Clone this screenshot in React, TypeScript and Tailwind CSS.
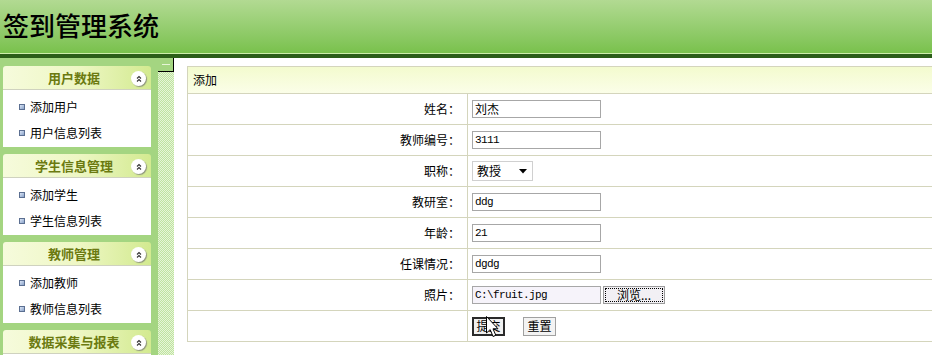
import React from "react";

const panels = [
  { title: "用户数据", items: ["添加用户", "用户信息列表"] },
  { title: "学生信息管理", items: ["添加学生", "学生信息列表"] },
  { title: "教师管理", items: ["添加教师", "教师信息列表"] },
  { title: "数据采集与报表", items: ["数据采集", "报表统计"] },
];

function Collapse() {
  return (
    <span className="absolute right-[5px] top-[5px] w-[15px] h-[15px] rounded-full bg-white shadow-[1px_1px_1px_#8f967e] flex items-center justify-center">
      <svg width="10" height="10" viewBox="0 0 10 10">
        <path d="M3 4.5 L5 2.5 L7 4.5" fill="none" stroke="#333" strokeWidth="1.1" />
        <path d="M3 7.5 L5 5.5 L7 7.5" fill="none" stroke="#333" strokeWidth="1.1" />
      </svg>
    </span>
  );
}

function Panel({ title, items }: { title: string; items: string[] }) {
  return (
    <div className="mb-[7px] w-[148px]">
      <div className="relative h-[24px] rounded-t-[3px] bg-gradient-to-r from-[#f6fbdc] via-[#eef7c4] to-[#d3ea90] border-b border-[#cfd2bf] flex items-center justify-center pr-[6px]">
        <span className="text-[13px] font-bold text-[#6b7a10]">{title}</span>
        <Collapse />
      </div>
      <div className="bg-white pt-[4px] pb-[1px] h-[57px]">
        {items.map((it) => (
          <div key={it} className="h-[26px] flex items-center pl-[16px]">
            <span className="w-[6px] h-[6px] border border-[#5b6f91] bg-gradient-to-br from-[#dbe6f6] to-[#8aa2c8] mr-[5px]" />
            <span className="text-[12px] text-black">{it}</span>
          </div>
        ))}
      </div>
    </div>
  );
}

function Row({ label, children }: { label: string; children?: React.ReactNode }) {
  return (
    <div className="flex h-[31px] border-t border-[#d4d5bc]">
      <div className="w-[280px] border-r border-[#d4d5bc] flex items-center justify-end pr-[7px] text-[12px] text-black">
        {label}
      </div>
      <div className="flex-1 flex items-center pl-[4px]">{children}</div>
    </div>
  );
}

function TextBox({ value }: { value: string }) {
  return (
    <div className="w-[129px] h-[18px] border border-[#a7a7a7] bg-white flex items-center pl-[2px] text-[12px] text-black">
      {value}
    </div>
  );
}

function Mono({ value }: { value: string }) {
  return (
    <div className="w-[129px] h-[18px] border border-[#a7a7a7] bg-white flex items-center pl-[2px] font-['Liberation_Mono',monospace] text-[11px] tracking-[-0.6px] text-black">
      {value}
    </div>
  );
}

export default function App() {
  return (
    <div className="relative w-[932px] h-[355px] overflow-hidden bg-white font-['Noto_Sans_CJK_SC','Noto_Sans',sans-serif]">
      <div className="h-[53px] bg-gradient-to-b from-[#b2da92] to-[#79c14c] flex items-center pl-[3px] pb-[4px]">
        <span className="text-[26px] leading-none text-black font-medium">签到管理系统</span>
      </div>
      <div className="h-px bg-[#cdeeaa]" />
      <div className="h-[4px] bg-[#2b5e18]" />
      <div className="flex h-[297px]">
        <div className="w-[158px] bg-[#a4d581] pt-[8px] pl-[3px] overflow-hidden">
          {panels.map((p) => (
            <Panel key={p.title} title={p.title} items={p.items} />
          ))}
        </div>
        <div className="w-[16px] bg-[image:repeating-conic-gradient(#bfe39f_0%_25%,#e6f5d8_0%_50%)] bg-[length:2px_2px]">
          <div className="h-[14px] bg-[#a4d581] border-r border-b border-black flex items-center justify-center">
            <span className="w-[8px] h-px bg-[#e6f5d6]" />
          </div>
        </div>
        <div className="flex-1 pl-[13px] pt-[8px] overflow-hidden">
          <div className="w-[800px] border-l border-b border-[#d4d5bc]">
            <div className="h-[27px] border-t border-[#d4d5bc] bg-gradient-to-b from-[#f3fbce] to-[#fbfee8] flex items-center pl-[5px] text-[12px] text-black">
              添加
            </div>
            <Row label="姓名：">
              <TextBox value="刘杰" />
            </Row>
            <Row label="教师编号：">
              <Mono value="3111" />
            </Row>
            <Row label="职称：">
              <div className="w-[61px] h-[20px] border border-[#d0d0d0] bg-white flex items-center pl-[4px] text-[12px] text-black">
                <span className="flex-1">教授</span>
                <svg width="8" height="5" viewBox="0 0 8 5" className="mr-[5px]">
                  <path d="M0 0 L8 0 L4 4.5 Z" fill="#000" />
                </svg>
              </div>
            </Row>
            <Row label="教研室：">
              <Mono value="ddg" />
            </Row>
            <Row label="年龄：">
              <Mono value="21" />
            </Row>
            <Row label="任课情况：">
              <Mono value="dgdg" />
            </Row>
            <Row label="照片：">
              <div className="w-[129px] h-[18px] border border-[#a7a7a7] bg-[#f6f3fa] flex items-center pl-[2px] font-['Liberation_Mono',monospace] text-[11px] tracking-[-0.6px] text-black">
                C:\fruit.jpg
              </div>
              <div className="ml-[2px] w-[62px] h-[18px] border border-[#9b9b9b] bg-[#f2f0f4] p-[1px]">
                <div className="w-full h-full border border-dotted border-black flex items-center justify-center text-[12px] text-black">
                  浏览...
                </div>
              </div>
            </Row>
            <Row label="">
              <div className="w-[33px] h-[19px] border-2 border-[#2a2a2a] bg-[#f0f0f0] flex items-center justify-center text-[12px] text-black">
                提交
              </div>
              <div className="ml-[18px] w-[33px] h-[19px] border border-[#a0a0a0] bg-[#f3f3f3] flex items-center justify-center text-[12px] text-black">
                重置
              </div>
            </Row>
          </div>
        </div>
      </div>
      <svg className="absolute left-[486px] top-[316px]" width="14" height="24" viewBox="0 0 14 24">
        <path d="M0.5 0.5 L0.5 17 L4.2 13.6 L7 20.5 L9.8 19.3 L7 12.8 L12 12.8 Z" fill="#fff" stroke="#000" strokeWidth="1" />
      </svg>
    </div>
  );
}
